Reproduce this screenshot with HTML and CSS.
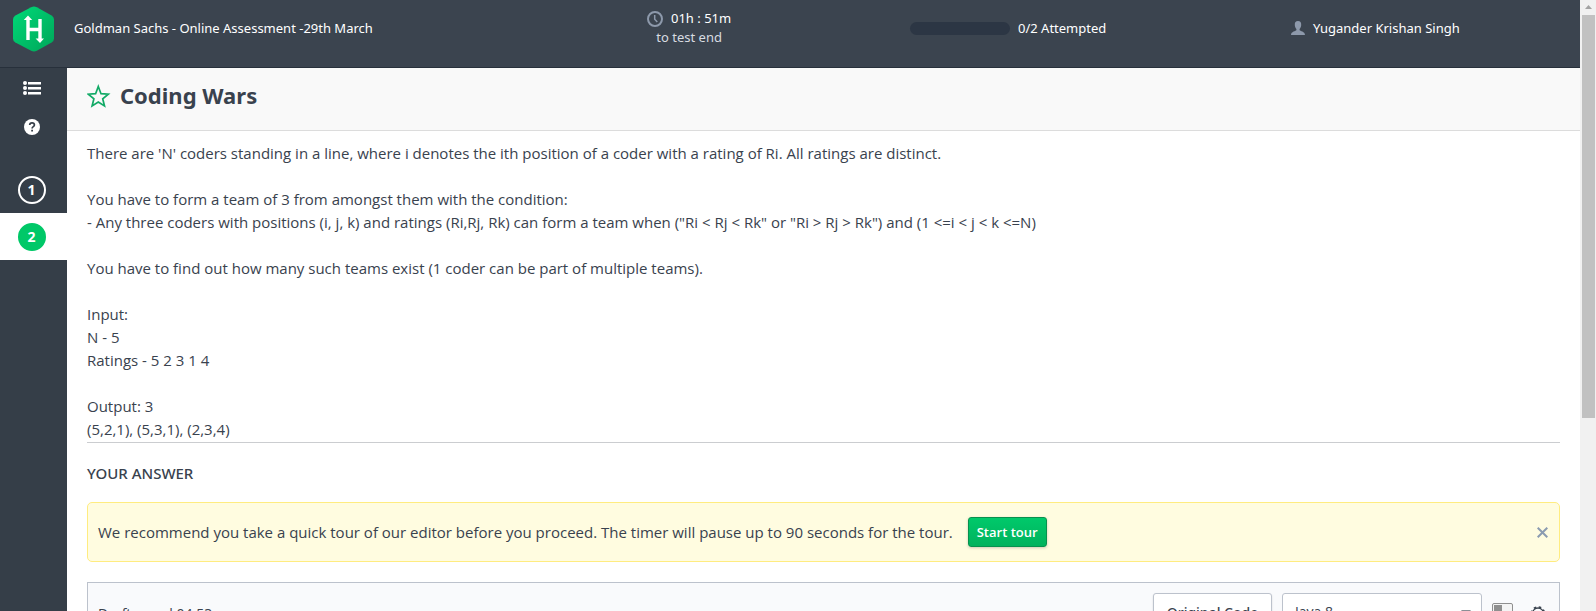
FILE: index.html
```html
<!DOCTYPE html>
<html lang="en">
<head>
<meta charset="utf-8">
<title>Coding Wars</title>
<link rel="stylesheet" href="styles.css">
</head>
<body>
<div class="window">
  <div class="app">
    <header class="topbar">
      <a class="logo" href="#" aria-label="Home">
        <svg width="42" height="46" viewBox="0 0 42 46">
          <defs><linearGradient id="hex" x1="0" y1="0" x2="1" y2="1"><stop offset="0" stop-color="#00d978"/><stop offset="1" stop-color="#00a659"/></linearGradient></defs>
          <path d="M18.2 1.2Q21 -.2 23.8 1.2L38.6 9.4Q41 10.8 41 13.4V32.6Q41 35.2 38.6 36.6L23.8 44.8Q21 46.2 18.2 44.8L2.4 36.6Q0 35.2 0 32.6V13.4Q0 10.8 2.4 9.4Z" fill="url(#hex)"/>
          <path d="M15 13V34M27 13V33M15 23.500H27" fill="none" stroke="#fff" stroke-width="3.4"/>
          <path d="M10.800 14L15 9.500L19.200 14ZM22.600 32.500L27 37L31 32.500Z" fill="#fff"/>
        </svg>
      </a>
      <div class="test-name">Goldman Sachs - Online Assessment -29th March</div>
      <div class="timer">
        <div class="time">
          <svg width="16" height="16" viewBox="0 0 16 16" fill="none" stroke="#8d99ab" stroke-width="2"><circle cx="8" cy="8" r="7"/><path d="M7.700 4V8.200L10.300 11" stroke-width="1.500"/></svg>
          <span>01h : 51m</span>
        </div>
        <div class="time-note">to test end</div>
      </div>
      <div class="attempts"><span class="track"></span><span>0/2 Attempted</span></div>
      <div class="user">
        <svg width="14" height="14" viewBox="0 0 14 14" fill="#8d99ab"><path d="M7 0C9.300 0 10.400 1.500 10.200 4C10.100 5.700 9.500 7 8.600 8V9C9 10.300 14 10.300 14 14H0C0 10.300 5 10.300 5.400 9V8C4.500 7 3.900 5.700 3.800 4C3.600 1.500 4.700 0 7 0Z"/></svg>
        <span>Yugander Krishan Singh</span>
      </div>
    </header>
    <div class="body">
      <nav class="sidebar">
        <a class="tool" href="#" aria-label="Question list">
          <svg width="18" height="14" viewBox="0 0 18 14" fill="#fff"><circle cx="2" cy="2" r="2"/><circle cx="2" cy="7" r="2"/><circle cx="2" cy="12" r="2"/><path d="M5 1H18V3.500H5ZM5 6H18V8.500H5ZM5 11H18V13.500H5Z"/></svg>
        </a>
        <a class="tool" href="#" aria-label="Help">
          <svg width="16" height="16" viewBox="0 0 16 16"><circle cx="8" cy="8" r="8" fill="#fff"/><path d="M5.700 6C5.700 3.200 10.400 3.200 10.400 6C10.400 7.700 8.100 7.600 8.100 9.500" fill="none" stroke="#353e48" stroke-width="1.700"/><path d="M7.200 10.700H9V12.500H7.200Z" fill="#353e48"/></svg>
        </a>
        <ul class="questions">
          <li><a class="question" href="#"><span class="number">1</span></a></li>
          <li><a class="question current" href="#" aria-current="page"><span class="number">2</span></a></li>
        </ul>
      </nav>
      <main class="main">
        <div class="heading">
          <svg width="24" height="26" viewBox="0 0 24 26" fill="none" stroke="#12aa66" stroke-width="1.700"><path d="M11.300 4.500L14 11.700L21.300 12.200L15.700 16.800L17.500 24L11.300 20.100L5.100 24L6.900 16.800L1.300 12.200L8.600 11.700Z"/></svg>
          <h1>Coding Wars</h1>
        </div>
        <div class="content">
          <div class="statement">
            <p>There are 'N' coders standing in a line, where i denotes the ith position of a coder with a rating of Ri. All ratings are distinct.</p>
            <p>You have to form a team of 3 from amongst them with the condition:<br>- Any three coders with positions (i, j, k) and ratings (Ri,Rj, Rk) can form a team when ("Ri &lt; Rj &lt; Rk" or "Ri &gt; Rj &gt; Rk") and (1 &lt;=i &lt; j &lt; k &lt;=N)</p>
            <p>You have to find out how many such teams exist (1 coder can be part of multiple teams).</p>
            <p>Input:<br>N - 5<br>Ratings - 5 2 3 1 4</p>
            <p>Output: 3<br>(5,2,1), (5,3,1), (2,3,4)</p>
          </div>
          <h2>YOUR ANSWER</h2>
          <div class="notice">
            <span>We recommend you take a quick tour of our editor before you proceed. The timer will pause up to 90 seconds for the tour.</span>
            <button class="start" type="button">Start tour</button>
            <button class="close" type="button" aria-label="Close">
              <svg width="11" height="11" viewBox="0 0 11 11" stroke="#8b9bb0" stroke-width="2"><path d="M.7 .7L10.300 10.300M10.300 .7L.7 10.300"/></svg>
            </button>
          </div>
          <section class="editor">
            <span class="draft">Draft saved 04:53</span>
            <button class="original" type="button">Original Code</button>
            <div class="language">
              <select aria-label="Language"><option>Java 8</option></select>
              <svg width="10" height="6" viewBox="0 0 10 6" fill="#8b8f96"><path d="M0 0H10L5 6Z"/></svg>
            </div>
            <button class="icon" type="button" aria-label="Layout">
              <svg width="22" height="20" viewBox="0 0 22 20"><rect x=".5" y=".5" width="20" height="19" rx="1.500" fill="#f4f4f4" stroke="#8f8f8f"/><path d="M2 2H10V18H2Z" fill="#8f8f8f"/></svg>
            </button>
            <button class="icon" type="button" aria-label="Settings">
              <svg width="16" height="16" viewBox="0 0 16 16" fill="none" stroke="#39424e"><circle cx="8" cy="8.500" r="5.500" stroke-width="1.300"/><circle cx="8" cy="8.500" r="6.500" stroke-width="1.600" stroke-dasharray="2.550 2.550"/><circle cx="8" cy="8.500" r="2"/></svg>
            </button>
          </section>
        </div>
      </main>
    </div>
  </div>
  <div class="scrollbar">
    <svg width="16" height="15" viewBox="0 0 16 15" fill="#a3a3a3"><path d="M5 9L8.500 5L12 9Z"/></svg>
    <div class="thumb"></div>
  </div>
</div>
</body>
</html>
```
FILE: styles.css
```css
* { box-sizing: border-box; }
body {
  margin: 0;
  font-family: "Open Sans", "Noto Sans", sans-serif;
  font-size: 14px;
  line-height: 19px;
  color: #39424e;
  background: #fff;
}
h1, h2, p, ul { margin: 0; padding: 0; }
svg { display: block; flex: none; }
button, select { font: inherit; color: inherit; cursor: pointer; }
.window { display: flex; height: 100vh; overflow: hidden; }
.app { flex: 1; min-width: 0; display: flex; flex-direction: column; }

.topbar {
  display: grid;
  grid-template-columns: 74px 573fr 263fr 381fr 289fr;
  height: 68px;
  padding-bottom: 11px;
  align-items: center;
  flex: none;
  font-family: "Noto Sans", sans-serif;
  font-size: 13px;
  color: #fff;
  background: #3b444f;
  border-bottom: 1px solid #27303b;
  white-space: nowrap;
}
.logo { padding: 2px 0 0 13px; }
.timer { justify-self: start; text-align: center; }
.time, .attempts, .user { display: flex; align-items: center; gap: 8px; }
.time-note { color: #d8dce1; }
.track { width: 100px; height: 13px; border-radius: 7px; background: #2c3644; }

.body { flex: 1; display: flex; min-height: 0; }
.sidebar {
  flex: none;
  width: 67px;
  background: #353e48;
}
.tool { display: flex; height: 39px; padding-right: 4px; align-items: center; justify-content: center; }
.questions { list-style: none; padding-top: 20px; }
.question { display: flex; height: 47px; padding-right: 4px; align-items: center; justify-content: center; text-decoration: none; }
.number {
  width: 28px;
  height: 28px;
  border: 2px solid #fff;
  border-radius: 50%;
  color: #fff;
  font-weight: 700;
  line-height: 24px;
  text-align: center;
}
.current { background: #fff; }
.current .number { background: #00c868; border-color: #00c868; }

.main { flex: 1; min-width: 0; }
.heading {
  display: flex;
  align-items: center;
  gap: 9px;
  height: 63px;
  padding: 0 20px 8px;
  background: #f9f9f9;
  border-bottom: 1px solid #dcdcdc;
}
h1, h2, .original { font-family: "Noto Sans", sans-serif; }
h1 { font-size: 22px; line-height: 30px; font-weight: 700; }
.content { padding: 11px 20px 0; }
.statement {
  padding-bottom: 1px;
  font-size: 15px;
  line-height: 23px;
  border-bottom: 1px solid #cbcdd0;
}
.statement p + p { margin-top: 23px; }
h2 { margin: 19px 0 17px; font-size: 15px; line-height: 23px; font-weight: 500; }
.notice {
  display: flex;
  align-items: center;
  gap: 15px;
  min-height: 60px;
  padding: 0 11px 0 10px;
  font-size: 15px;
  font-weight: 500;
  background: #fffce0;
  border: 1px solid #ffec80;
  border-radius: 5px;
}
.start {
  height: 30px;
  padding: 0 8px;
  font-size: 13px;
  font-weight: 600;
  color: #fff;
  background: linear-gradient(#00c96b, #00b25d);
  border: 1px solid #07914e;
  border-radius: 3px;
  box-shadow: 0 1px 3px #0003;
}
.close, .icon { padding: 0; border: 0; background: none; }
.close { margin-left: auto; }
.editor {
  display: flex;
  align-items: center;
  gap: 10px;
  margin-top: 20px;
  height: 62px;
  padding: 0 13px 0 10px;
  background: #f9fafc;
  border: 1px solid #bcc2cc;
}
.draft { flex: 1; }
.original, .language select {
  height: 40px;
  border: 1px solid #bcc2cc;
  border-radius: 3px;
  background: #fff;
}
.original { width: 119px; padding: 0 6px 2px; font-weight: 500; box-shadow: 0 1px 2px #0002; }
.language { display: grid; width: 200px; align-items: center; }
.language select, .language svg { grid-area: 1 / 1; }
.language select { width: 100%; padding: 0 12px 4px; appearance: none; }
.language svg { justify-self: end; margin-right: 11px; pointer-events: none; }
.icon + .icon { margin-left: 6px; }

.scrollbar { flex: none; width: 16px; background: #f1f1f1; }
.thumb { height: 66%; margin: 0 1px 0 2px; background: #c1c1c1; }
```
